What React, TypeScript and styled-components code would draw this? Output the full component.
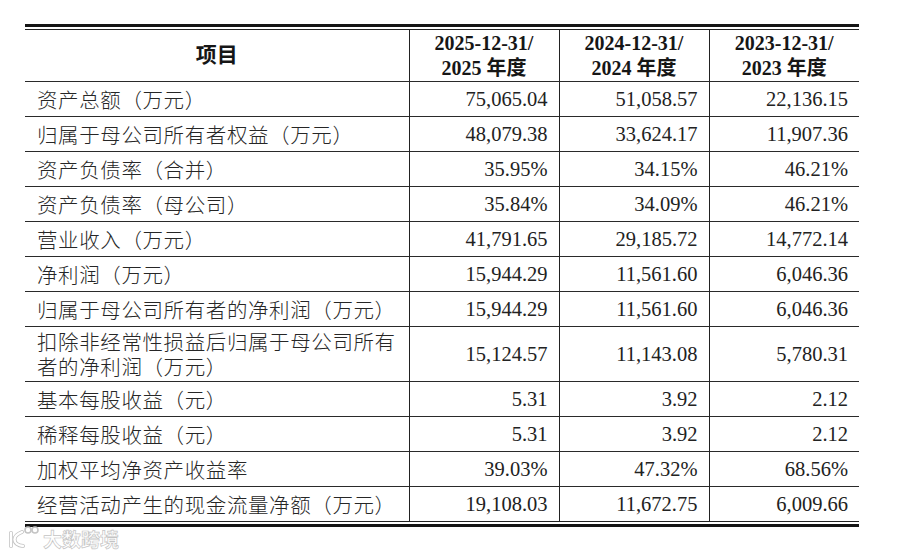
import styled, { createGlobalStyle } from "styled-components";

const GlobalStyle = createGlobalStyle`
  html, body {
    margin: 0;
    padding: 0;
    background: #ffffff;
  }
  body {
    font-family: "Liberation Serif", "Noto Sans CJK SC", serif;
    color: #1e1e1e;
  }
`;

const Page = styled.div`
  position: relative;
  width: 900px;
  height: 553px;
  padding: 24px 0 0 25px;
  box-sizing: border-box;
`;

// double rule: thick outside, thin inside
const Frame = styled.div`
  width: 834px;
  border-top: 3px solid #151515;
  border-bottom: 3px solid #151515;
  padding: 2px 0;
`;

const Table = styled.table`
  width: 100%;
  border-collapse: collapse;
  table-layout: fixed;
  border-top: 1px solid #222;
  border-bottom: 1px solid #222;
`;

const HeadCell = styled.th<{ $first?: boolean }>`
  height: 51px;
  padding: 0;
  font-weight: 700;
  font-size: ${(p) => (p.$first ? "21px" : "20px")};
  line-height: 25px;
  text-align: center;
  vertical-align: middle;
  color: #161616;
  border-left: ${(p) => (p.$first ? "none" : "1.6px solid #222")};
  border-bottom: 1px solid #2a2a2a;
  font-family: "Liberation Serif", "Noto Sans CJK SC", serif;
`;

const Row = styled.tr<{ $tall?: boolean }>`
  height: ${(p) => (p.$tall ? "55px" : "35px")};
`;

const Label = styled.td`
  padding: 0 0 0 12px;
  font-family: "Noto Sans CJK SC", sans-serif;
  font-weight: 300;
  font-size: 20.5px;
  letter-spacing: 0.6px;
  line-height: 25px;
  color: #262626;
  vertical-align: middle;
  white-space: nowrap;
  border-top: 1px solid #2a2a2a;
`;

const LabelLine = styled.span`
  display: block;
`;

const Value = styled.td`
  padding: 0 11px 0 0;
  text-align: right;
  font-size: 20.5px;
  color: #222;
  vertical-align: middle;
  border-left: 1.6px solid #222;
  border-top: 1px solid #2a2a2a;
`;

const Watermark = styled.div`
  position: absolute;
  left: 6px;
  top: 524px;
  display: flex;
  align-items: center;
  gap: 1px;
`;

const MarkText = styled.span`
  font-family: "Noto Sans CJK SC", sans-serif;
  font-weight: 700;
  font-size: 19px;
  line-height: 24px;
  margin-top: 3px;
  color: #ffffff;
  letter-spacing: 0px;
  -webkit-text-stroke: 0.7px #c4c4c4;
`;

const columns = ["2025", "2024", "2023"];

const rows: { label: string[]; values: string[] }[] = [
  { label: ["资产总额（万元）"], values: ["75,065.04", "51,058.57", "22,136.15"] },
  { label: ["归属于母公司所有者权益（万元）"], values: ["48,079.38", "33,624.17", "11,907.36"] },
  { label: ["资产负债率（合并）"], values: ["35.95%", "34.15%", "46.21%"] },
  { label: ["资产负债率（母公司）"], values: ["35.84%", "34.09%", "46.21%"] },
  { label: ["营业收入（万元）"], values: ["41,791.65", "29,185.72", "14,772.14"] },
  { label: ["净利润（万元）"], values: ["15,944.29", "11,561.60", "6,046.36"] },
  { label: ["归属于母公司所有者的净利润（万元）"], values: ["15,944.29", "11,561.60", "6,046.36"] },
  {
    label: ["扣除非经常性损益后归属于母公司所有", "者的净利润（万元）"],
    values: ["15,124.57", "11,143.08", "5,780.31"],
  },
  { label: ["基本每股收益（元）"], values: ["5.31", "3.92", "2.12"] },
  { label: ["稀释每股收益（元）"], values: ["5.31", "3.92", "2.12"] },
  { label: ["加权平均净资产收益率"], values: ["39.03%", "47.32%", "68.56%"] },
  { label: ["经营活动产生的现金流量净额（万元）"], values: ["19,108.03", "11,672.75", "6,009.66"] },
];

const logoPaths = ["M5 8 V21", "M16 7 C11 9 8.5 12 8.5 14.5 C8.5 18 12 20.5 17 21"];

function Logo() {
  return (
    <svg width="36" height="26" viewBox="0 0 36 26" fill="none">
      <g stroke="#c4c4c4" strokeWidth="4" strokeLinecap="round">
        {logoPaths.map((d) => (
          <path key={d} d={d} />
        ))}
      </g>
      <g stroke="#ffffff" strokeWidth="2.4" strokeLinecap="round">
        {logoPaths.map((d) => (
          <path key={d} d={d} />
        ))}
      </g>
      <circle cx="22" cy="5" r="3" stroke="#c4c4c4" strokeWidth="1.6" fill="#fff" />
      <circle cx="29" cy="5" r="3" stroke="#c4c4c4" strokeWidth="1.6" fill="#fff" />
    </svg>
  );
}

export default function App() {
  return (
    <>
      <GlobalStyle />
      <Page>
        <Frame>
          <Table>
            <colgroup>
              <col style={{ width: 384 }} />
              <col style={{ width: 150 }} />
              <col style={{ width: 150 }} />
              <col style={{ width: 150 }} />
            </colgroup>
            <thead>
              <tr>
                <HeadCell $first>项目</HeadCell>
                {columns.map((y) => (
                  <HeadCell key={y}>
                    {y}-12-31/
                    <br />
                    {y} 年度
                  </HeadCell>
                ))}
              </tr>
            </thead>
            <tbody>
              {rows.map((r, i) => (
                <Row key={i} $tall={r.label.length > 1}>
                  <Label>
                    {r.label.map((line, j) => (
                      <LabelLine key={j}>{line}</LabelLine>
                    ))}
                  </Label>
                  {r.values.map((v, k) => (
                    <Value key={k}>{v}</Value>
                  ))}
                </Row>
              ))}
            </tbody>
          </Table>
        </Frame>
        <Watermark>
          <Logo />
          <MarkText>大数跨境</MarkText>
        </Watermark>
      </Page>
    </>
  );
}
